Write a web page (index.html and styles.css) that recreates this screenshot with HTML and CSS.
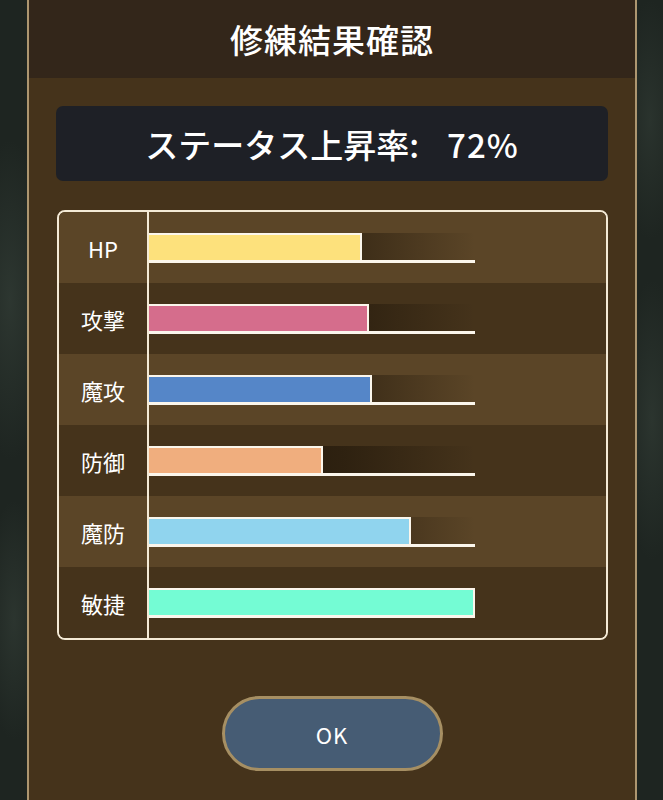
FILE: index.html
```html
<!DOCTYPE html>
<html lang="ja">
<head>
<meta charset="utf-8">
<link rel="stylesheet" href="styles.css">
</head>
<body>
<div class="panel">
  <div class="header"><h1 class="title">修練結果確認</h1></div>
  <div class="content">
    <div class="rate">ステータス上昇率:<span class="num">72%</span></div>
    <div class="table">
      <div class="row light">
        <div class="label">HP</div>
        <div class="cell"><div class="track"><div class="fill hp" style="width:211px"></div></div></div>
      </div>
      <div class="row dark">
        <div class="label">攻撃</div>
        <div class="cell"><div class="track"><div class="fill atk" style="width:218px"></div></div></div>
      </div>
      <div class="row light">
        <div class="label">魔攻</div>
        <div class="cell"><div class="track"><div class="fill matk" style="width:221px"></div></div></div>
      </div>
      <div class="row dark">
        <div class="label">防御</div>
        <div class="cell"><div class="track"><div class="fill def" style="width:172px"></div></div></div>
      </div>
      <div class="row light">
        <div class="label">魔防</div>
        <div class="cell"><div class="track"><div class="fill mdef" style="width:260px"></div></div></div>
      </div>
      <div class="row dark">
        <div class="label">敏捷</div>
        <div class="cell"><div class="track"><div class="fill agi" style="width:324px"></div></div></div>
      </div>
    </div>
    <div class="actions"><button class="ok">OK</button></div>
  </div>
</div>
</body>
</html>
```

FILE: styles.css
```css
html, body {
  margin: 0;
  padding: 0;
}
body {
  width: 663px;
  height: 800px;
  overflow: hidden;
  background-color: #1e2521;
  background-image:
    radial-gradient(ellipse 40px 160px at 10px 300px, rgba(60,72,64,0.5), transparent),
    radial-gradient(ellipse 30px 120px at 14px 620px, rgba(60,72,64,0.45), transparent),
    radial-gradient(ellipse 30px 140px at 652px 420px, rgba(60,72,64,0.45), transparent),
    radial-gradient(ellipse 30px 120px at 650px 120px, rgba(60,72,64,0.4), transparent);
  font-family: "Noto Sans CJK JP", "Noto Sans", sans-serif;
  color: #ffffff;
}
.panel {
  margin-left: 27px;
  width: 606px;
  height: 800px;
  border-left: 2px solid #ad9670;
  border-right: 2px solid #ad9670;
  background: #45331b;
}
.header {
  height: 78px;
  background: #33261a;
  display: flex;
  align-items: center;
  justify-content: center;
}
.title {
  margin: 0;
  font-size: 33px;
  font-weight: 500;
  letter-spacing: 1px;
  color: #ffffff;
}
.content {
  padding: 28px 27px 0 27px;
  display: flex;
  flex-direction: column;
}
.rate {
  height: 75px;
  background: #1e2026;
  border-radius: 7px;
  display: flex;
  align-items: center;
  justify-content: center;
  font-size: 33px;
  font-weight: 500;
  color: #ffffff;
}
.num {
  margin-left: 28px;
  letter-spacing: 1px;
}
.table {
  margin-top: 29px;
  margin-left: 1px;
  border: 2px solid #f4ead6;
  border-radius: 8px;
  overflow: hidden;
  display: flex;
  flex-direction: column;
}
.row {
  height: 71px;
  display: flex;
}
.row.light { background: #5b4527; }
.row.dark { background: #45331b; }
.label {
  width: 88px;
  border-right: 2px solid #f4ead6;
  display: flex;
  align-items: center;
  justify-content: center;
  font-size: 22px;
  color: #ffffff;
}
.cell {
  display: flex;
  align-items: center;
}
.track {
  width: 326px;
  height: 27px;
  border-bottom: 3px solid #fbf6ec;
  background: linear-gradient(to right, rgba(24,16,6,0.95) 0%, rgba(24,16,6,0.5) 60%, rgba(24,16,6,0) 100%);
}
.fill {
  height: 25px;
  border-top: 2px solid #fbf6ec;
  border-right: 2px solid #fbf6ec;
}
.hp { background: #fde17c; }
.atk { background: #d56d8c; }
.matk { background: #5586c8; }
.def { background: #f0ae7e; }
.mdef { background: #90d4ee; }
.agi { background: #74fcd4; }
.actions {
  display: flex;
  justify-content: center;
  margin-top: 56px;
}
.ok {
  width: 221px;
  height: 75px;
  border-radius: 38px;
  border: 3px solid #a68f63;
  background: #465c74;
  color: #ffffff;
  font-family: "Noto Sans CJK JP", "Noto Sans", sans-serif;
  font-size: 22px;
  letter-spacing: 1px;
  padding: 0;
}
```
